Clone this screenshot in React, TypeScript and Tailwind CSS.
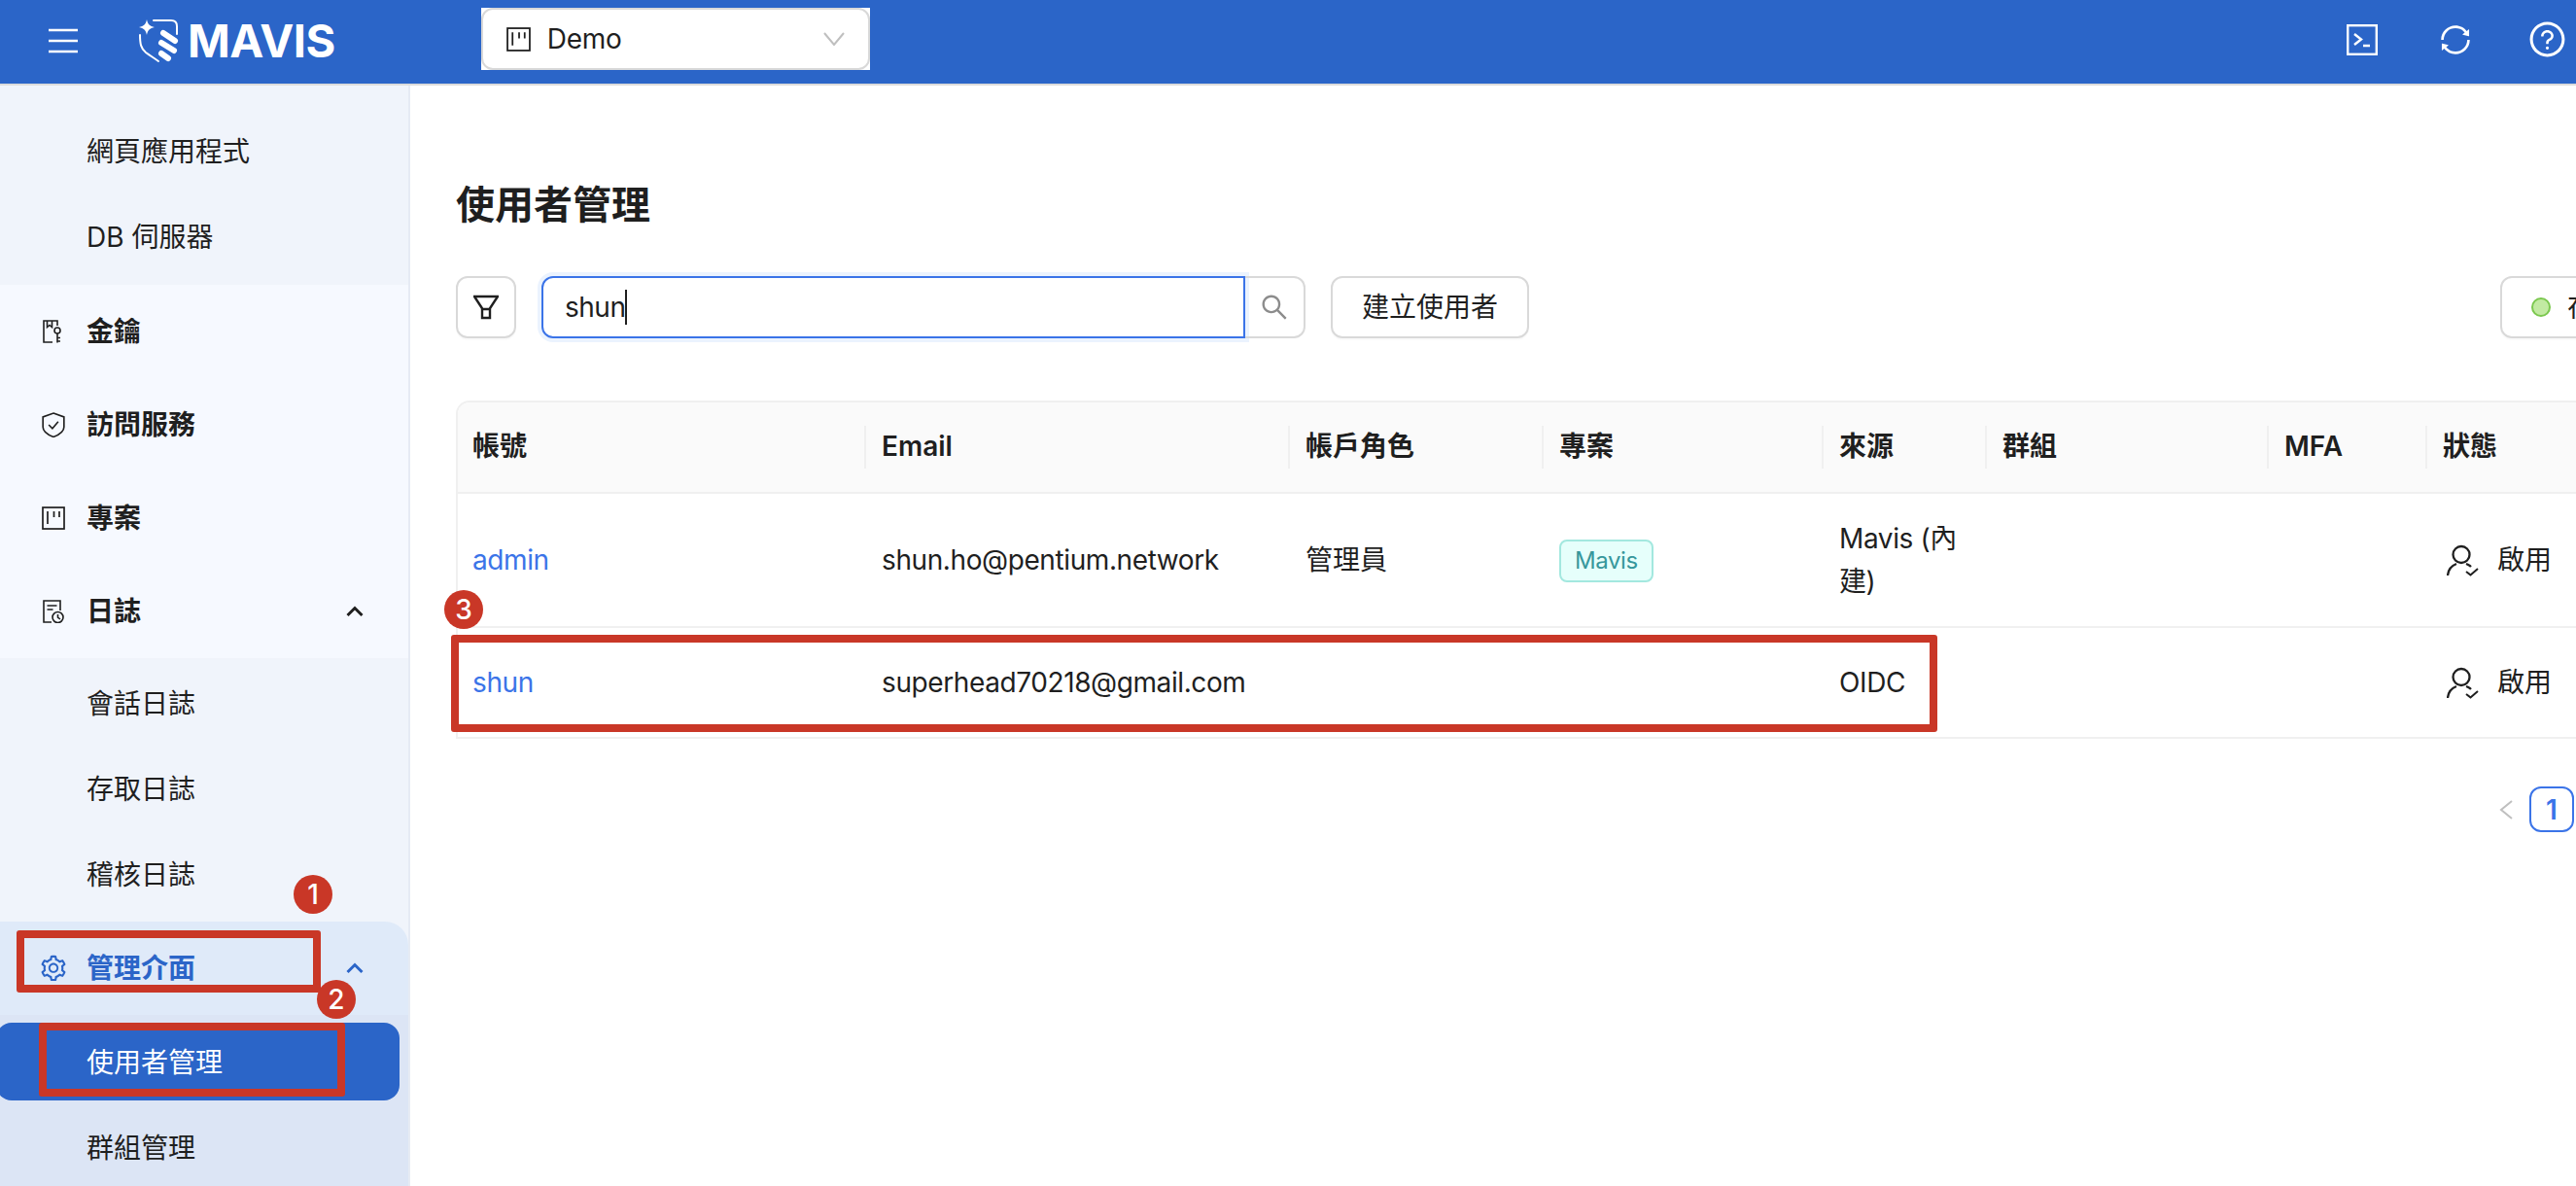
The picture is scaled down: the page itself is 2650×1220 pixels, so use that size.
import { AiOutlineQuestionCircle, AiOutlineSearch, AiOutlineSetting, AiOutlineSync } from "react-icons/ai";
import type { ReactNode } from "react";

function ProjectIcon({ className }: { className?: string }) {
  return (
    <svg className={className} viewBox="0 0 24 24" fill="none" stroke="currentColor" strokeWidth="1.7">
      <rect x="1" y="1" width="22" height="22" />
      <path d="M6 5v13M12.5 5v6M18 5v6" />
    </svg>
  );
}

function KeyIcon() {
  return (
    <svg className="size-6" viewBox="0 0 24 24" fill="none" stroke="currentColor" strokeWidth="1.6">
      <path d="M16 6V1H2v22h9" />
      <path d="M5.5 1v6.5L8 5.5l2.5 2V1" />
      <circle cx="16" cy="11" r="3" />
      <path d="M16 14v9.5M16 18.5h3M16 22h3" />
    </svg>
  );
}

function ShieldIcon() {
  return (
    <svg className="size-[26px]" viewBox="0 0 24 24" fill="none" stroke="currentColor" strokeWidth="1.5">
      <path d="M12 1l10 3.5V14c0 4-5 7.5-10 9.5C7 21.500 2 18 2 14V4.500z" />
      <path d="M7.500 12l3.500 3.500 5.500-6.500" />
    </svg>
  );
}

function LogIcon() {
  return (
    <svg className="size-6" viewBox="0 0 24 24" fill="none" stroke="currentColor" strokeWidth="1.6">
      <path d="M19 11V1H2v22h8" />
      <path d="M5.500 6h10M5.500 10h6" />
      <circle cx="16.500" cy="18" r="5.500" />
      <path d="M16.500 15v3l2.500 2" />
    </svg>
  );
}

function ChevronUp({ className }: { className?: string }) {
  return (
    <svg className={className} width="18" height="12" viewBox="0 0 18 12" fill="none" stroke="currentColor" strokeWidth="3">
      <path d="M1.500 10L9 2.500 16.500 10" />
    </svg>
  );
}

function UserCheckIcon() {
  return (
    <svg className="size-[34px] shrink-0" viewBox="0 0 34 34" fill="none" stroke="currentColor" strokeWidth="2.3">
      <circle cx="15" cy="11.500" r="8.500" />
      <path d="M1 33c.5-6 4-10 9-12M20 21c2 .7 4 2 5 3" />
      <path d="M20 29l4.500 3.500L32 26" strokeWidth="2" />
    </svg>
  );
}

function SubItem({ label, active }: { label: string; active?: boolean }) {
  return (
    <div
      className={
        active
          ? "ml-[-4px] flex h-20 w-[415px] items-center rounded-2xl bg-[#2b65c8] pl-[93px] pt-[1px] text-white"
          : "flex h-20 items-center pl-[89px] pt-[2px]"
      }
    >
      {label}
    </div>
  );
}

function MainItem({ icon, label, open }: { icon: ReactNode; label: string; open?: boolean }) {
  return (
    <div className="flex h-24 items-center font-semibold">
      <span className="flex w-[89px] justify-center pl-[30px] pr-[9px]">{icon}</span>
      <span>{label}</span>
      {open ? <ChevronUp className="ml-auto mr-[46px]" /> : null}
    </div>
  );
}

function Sidebar() {
  return (
    <aside className="w-[422px] shrink-0 overflow-hidden border-r-2 border-[#e6ebf4] bg-[#f6f9ff] text-[28px] text-[#1f1f1f]">
      <div className="flex flex-col gap-2 bg-[#f0f4fb] pb-[10px] pt-[27px]">
        <SubItem label="網頁應用程式" />
        <SubItem label="DB 伺服器" />
      </div>
      <MainItem icon={<KeyIcon />} label="金鑰" />
      <MainItem icon={<ShieldIcon />} label="訪問服務" />
      <MainItem icon={<ProjectIcon className="size-6" />} label="專案" />
      <MainItem icon={<LogIcon />} label="日誌" open />
      <div className="bg-[#f0f4fb]">
        <div className="flex flex-col gap-2 pb-[9px] pt-[6px]">
          <SubItem label="會話日誌" />
          <SubItem label="存取日誌" />
          <SubItem label="稽核日誌" />
        </div>
        <div className="rounded-tr-[24px] bg-[#dfeaf9] text-[#2b65c8]">
          <MainItem icon={<AiOutlineSetting className="size-[30px] shrink-0" />} label="管理介面" open />
        </div>
        <div className="flex flex-col gap-2 bg-[#dce5f5] pt-2 pb-4">
          <SubItem label="使用者管理" active />
          <SubItem label="群組管理" />
        </div>
      </div>
    </aside>
  );
}

function TopBar() {
  return (
    <header className="flex h-[88px] shrink-0 items-center border-b-2 border-[#dcdcdc] bg-[#2b65c8] text-white">
      <svg className="ml-[50px] -mt-[3px]" width="30" height="26" viewBox="0 0 30 26" stroke="currentColor" strokeWidth="2.400">
        <path d="M0 2h30M0 13h30M0 24h30" />
      </svg>
      <svg className="ml-[51px] -mt-[1px]" width="70" height="60" viewBox="0 0 70 60" fill="none" stroke="currentColor" strokeLinecap="round">
        <path d="M20 7c1 5 3 7 8 8-5 1-7 3-8 8-1-5-3-7-8-8 5-1 7-3 8-8z" fill="currentColor" stroke="none" />
        <path d="M27 8h18c4 0 6 2 6 6v8" strokeWidth="2" />
        <path d="M13 23c0 9 1 14 6 18 4 3 9 6 13 9" strokeWidth="2" />
        <path d="M37 21l12 8M35 31l13 8M35 42l7 5" strokeWidth="6" />
      </svg>
      <span className="-ml-[8px] -mt-[3px] text-[47px] font-bold leading-none tracking-[-0.5px]">MAVIS</span>
      <div className="ml-[150px] -mt-[6px] h-16 w-[400px] bg-white">
        <div className="flex h-full items-center rounded-xl border-2 border-[#d9d9d9] pl-6 text-[28px] text-[#1f1f1f]">
          <ProjectIcon className="size-[25px]" />
          <span className="ml-[17px] tracking-[-0.3px]">Demo</span>
          <svg className="ml-auto mr-[24px] text-[#bfbfbf]" width="22" height="14" viewBox="0 0 22 14" fill="none" stroke="currentColor" strokeWidth="2">
            <path d="M1 1l10 12L21 1" />
          </svg>
        </div>
      </div>
      <div className="ml-auto -mt-[5px] flex items-center pr-[9px]">
        <svg width="32" height="32" viewBox="0 0 32 32" fill="none" stroke="currentColor" strokeWidth="2.400">
          <rect x="1.200" y="1.200" width="29.600" height="29.600" />
          <path d="M8 10l7 5.500-7 5.500M17 22h7" />
        </svg>
        <AiOutlineSync className="ml-[62px] size-[36px]" />
        <AiOutlineQuestionCircle className="ml-[56px] size-[41px]" />
      </div>
    </header>
  );
}

function Toolbar() {
  return (
    <div className="mt-[45px] flex h-16 w-[2300px] items-center text-[28px] text-[#1f1f1f]">
      <button type="button" className="grid h-16 w-[62px] place-items-center rounded-xl border-2 border-[#d9d9d9] shadow-[0_2px_0_rgba(0,0,0,0.02)]">
        <svg width="26" height="26" viewBox="0 0 26 26" fill="none" stroke="currentColor" strokeWidth="2.400">
          <path d="M1 2h24L16.500 15h-7zM9 15h8v9H9z" />
        </svg>
      </button>
      <div className="ml-[26px] flex h-16 w-[724px] items-center rounded-l-xl border-2 border-[#3b74e8] pl-[22px] tracking-[-0.5px] shadow-[0_0_0_4px_#ebf3fe]">
        shun
        <span className="h-9 w-[2px] bg-[#1f1f1f]" />
      </div>
      <button type="button" className="grid h-16 w-[62px] place-items-center rounded-r-xl border-2 border-l-0 border-[#d9d9d9] text-[#8c8c8c]">
        <AiOutlineSearch className="size-8" />
      </button>
      <button type="button" className="ml-[26px] h-16 w-[204px] rounded-xl border-2 border-[#d9d9d9] shadow-[0_2px_0_rgba(0,0,0,0.02)]">
        建立使用者
      </button>
      <button type="button" className="ml-auto flex h-16 w-[197px] items-center rounded-xl border-2 border-[#d9d9d9] pl-[30px] shadow-[0_2px_0_rgba(0,0,0,0.02)]">
        <span className="size-5 rounded-full border-2 border-[#7cc84f] bg-[#c2eaa2]" />
        <span className="ml-[17px]">在線</span>
      </button>
    </div>
  );
}

function HeadCell({ children, first }: { children?: ReactNode; first?: boolean }) {
  return (
    <th className={first ? "relative pb-[2px] pl-[15px] text-left font-semibold" : "relative px-[18px] pb-[2px] text-left font-semibold"}>
      {first ? null : <span className="absolute left-0 top-[24px] h-[44px] w-[2px] bg-[#f0f0f0]" />}
      {children}
    </th>
  );
}

function StatusCell() {
  return (
    <td>
      <div className="flex items-center pl-[22px]">
        <UserCheckIcon />
        <span className="ml-[18px]">啟用</span>
      </div>
    </td>
  );
}

function UsersTable() {
  return (
    <div className="mt-[64px] w-[2300px] overflow-hidden rounded-tl-[14px] border-l-2 border-t-2 border-[#f0f0f0]">
      <table className="w-full table-fixed border-collapse text-[28px] leading-[44px] text-[#1f1f1f]">
        <colgroup>
          <col className="w-[418px]" />
          <col className="w-[436px]" />
          <col className="w-[261px]" />
          <col className="w-[288px]" />
          <col className="w-[168px]" />
          <col className="w-[290px]" />
          <col className="w-[163px]" />
          <col />
        </colgroup>
        <thead>
          <tr className="h-[93px] border-b-2 border-[#f0f0f0] bg-[#fafafa]">
            <HeadCell first>帳號</HeadCell>
            <HeadCell>Email</HeadCell>
            <HeadCell>帳戶角色</HeadCell>
            <HeadCell>專案</HeadCell>
            <HeadCell>來源</HeadCell>
            <HeadCell>群組</HeadCell>
            <HeadCell>MFA</HeadCell>
            <HeadCell>狀態</HeadCell>
          </tr>
        </thead>
        <tbody>
          <tr className="h-[138px] border-b-2 border-[#f0f0f0]">
            <td className="pl-[15px] tracking-[-0.4px] text-[#3b74e8]">admin</td>
            <td className="px-[18px] tracking-[-0.4px]">shun.ho@pentium.network</td>
            <td className="px-[18px]">管理員</td>
            <td className="px-[18px]">
              <span className="inline-block rounded-lg border-2 border-[#a3e8df] bg-[#e6fffb] px-[14px] text-[24px] leading-[40px] tracking-[-0.4px] text-[#37979c]">Mavis</span>
            </td>
            <td className="px-[18px] tracking-[-0.4px]">Mavis (內建)</td>
            <td />
            <td />
            <StatusCell />
          </tr>
          <tr className="h-[114px] border-b-2 border-[#f0f0f0]">
            <td className="pl-[15px] tracking-[-0.4px] text-[#3b74e8]">shun</td>
            <td className="px-[18px] tracking-[-0.4px]">superhead70218@gmail.com</td>
            <td />
            <td />
            <td className="px-[18px] tracking-[-0.4px]">OIDC</td>
            <td />
            <td />
            <StatusCell />
          </tr>
        </tbody>
      </table>
    </div>
  );
}

function Marker({ n, className }: { n: number; className: string }) {
  return (
    <span className={"absolute grid size-10 place-items-center rounded-full bg-[#c93727] text-[28px] font-medium leading-none text-white " + className}>
      {n}
    </span>
  );
}

export default function App() {
  return (
    <div className="relative flex h-[1220px] w-[2650px] flex-col overflow-hidden bg-white [font-family:Inter,'Noto_Sans_CJK_TC',sans-serif]">
      <TopBar />
      <div className="flex min-h-0 flex-1">
        <Sidebar />
        <main className="min-w-0 flex-1 overflow-hidden pl-[47px] pt-[95px]">
          <h1 className="text-[40px] font-bold leading-[56px] text-[#1f1f1f]">使用者管理</h1>
          <Toolbar />
          <UsersTable />
          <div className="mt-[49px] flex w-[2179px] items-center justify-end">
            <svg className="mr-[16px] text-[#bfbfbf]" width="16" height="22" viewBox="0 0 16 22" fill="none" stroke="currentColor" strokeWidth="2">
              <path d="M14 2L3 11l11 9" />
            </svg>
            <span className="grid h-[47px] w-[46px] place-items-center rounded-xl border-2 border-[#3b74e8] text-[28px] font-semibold text-[#3b74e8]">1</span>
          </div>
        </main>
      </div>

      <span className="absolute left-[17px] top-[957px] h-16 w-[313px] rounded-[3px] border-[8px] border-[#c93727]" />
      <span className="absolute left-[40px] top-[1052px] h-[76px] w-[315px] rounded-[3px] border-[8px] border-[#c93727]" />
      <span className="absolute left-[464px] top-[653px] h-[100px] w-[1529px] rounded-[3px] border-[8px] border-[#c93727]" />
      <Marker n={1} className="left-[302px] top-[900px]" />
      <Marker n={2} className="left-[326px] top-[1008px]" />
      <Marker n={3} className="left-[457px] top-[607px]" />
    </div>
  );
}
